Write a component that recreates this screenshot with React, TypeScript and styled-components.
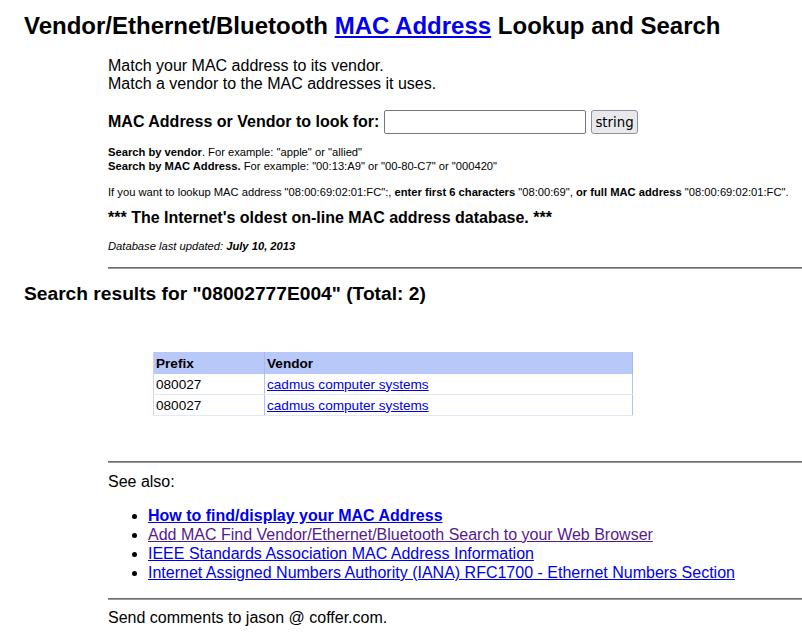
import React from 'react';
import styled, { createGlobalStyle } from 'styled-components';

const Global = createGlobalStyle`
  html, body { margin: 0; padding: 0; background: #fff; overflow-x: hidden; }
  body { font-family: "Liberation Sans", Arial, Helvetica, sans-serif; color: #000; }
`;

const Page = styled.div`
  padding: 12px 0 20px 24px;
`;

const Title = styled.h1`
  margin: 0;
  font-size: 24px;
  line-height: 28px;
  font-weight: bold;
`;

const Link = styled.a<{ $visited?: boolean; $bold?: boolean }>`
  color: ${(p) => (p.$visited ? '#551a8b' : '#0000ee')};
  text-decoration: underline;
  font-weight: ${(p) => (p.$bold ? 'bold' : 'inherit')};
  cursor: pointer;
`;

const Indented = styled.div`
  margin-left: 84px;
`;

const Intro = styled.p`
  margin: 17px 0 0;
  font-size: 16px;
  line-height: 18px;
`;

const SearchForm = styled.form`
  display: flex;
  align-items: center;
  gap: 5px;
  margin-top: 17px;
`;

const Label = styled.label`
  font-size: 16px;
  font-weight: bold;
`;

const Input = styled.input`
  box-sizing: border-box;
  width: 202px;
  height: 24px;
  border: 1px solid #767676;
  border-radius: 2px;
  padding: 1px 2px;
  margin: 0;
  font-family: "DejaVu Sans", sans-serif;
  font-size: 13.33px;
`;

const Button = styled.button`
  box-sizing: border-box;
  height: 24px;
  padding: 1px 3px;
  margin: 0;
  border: 1px solid #8f8f9d;
  border-radius: 3px;
  background: #e9e9ed;
  font-family: "DejaVu Sans", sans-serif;
  font-size: 13.33px;
  color: #000;
`;

const Small = styled.p<{ $top: number }>`
  margin: ${(p) => p.$top}px 0 0;
  font-size: 11.2px;
  line-height: 14px;
`;

const Slogan = styled.h3`
  margin: 10px 0 0;
  font-size: 16px;
  line-height: 18px;
  font-weight: bold;
`;

const Updated = styled.p`
  margin: 12px 0 0;
  font-size: 11.2px;
  line-height: 14px;
  font-style: italic;
`;

const Rule = styled.hr<{ $top: number }>`
  margin: ${(p) => p.$top}px 0 0;
  border: 0;
  border-top: 1px solid #6e6e6e;
  border-bottom: 1px solid #9a9a9a;
  height: 0;
`;

const ResultsTitle = styled.h2`
  margin: 14px 0 0;
  font-size: 19.2px;
  line-height: 22px;
  font-weight: bold;
`;

const Table = styled.table`
  margin: 47px 0 0 129px;
  width: 480px;
  border-collapse: collapse;
  font-size: 13.6px;
  border-left: 1px solid #c9d3f8;
  border-right: 1px solid #9fb1f3;
`;

const HeadCell = styled.th<{ $w?: number }>`
  background: #b8c8f8;
  text-align: left;
  font-weight: bold;
  padding: 0 2px;
  height: 22px;
  width: ${(p) => (p.$w ? `${p.$w}px` : 'auto')};
  border-right: 1px solid #a6b8f2;
`;

const Cell = styled.td`
  padding: 0 2px;
  height: 20px;
  border-right: 1px solid #b4c3f4;
  border-bottom: 1px solid #e2e7fa;
`;

const SeeAlso = styled.p`
  margin: 10px 0 0;
  font-size: 16px;
  line-height: 18px;
`;

const List = styled.ul`
  margin: 15px 0 0;
  padding-left: 40px;
  font-size: 16px;
  line-height: 19px;
`;

const Item = styled.li`
  margin: 0;
`;

const Footer = styled.p`
  margin: 9px 0 0;
  font-size: 16px;
  line-height: 18px;
`;

const rows = [
  { prefix: '080027', vendor: 'cadmus computer systems' },
  { prefix: '080027', vendor: 'cadmus computer systems' },
];

export default function App() {
  return (
    <>
      <Global />
      <Page>
        <Title>
          Vendor/Ethernet/Bluetooth <Link>MAC Address</Link> Lookup and Search
        </Title>
        <Indented>
          <Intro>
            Match your MAC address to its vendor.
            <br />
            Match a vendor to the MAC addresses it uses.
          </Intro>
          <SearchForm onSubmit={(e) => e.preventDefault()}>
            <Label htmlFor="q">MAC Address or Vendor to look for:</Label>
            <Input id="q" type="text" />
            <Button type="submit">string</Button>
          </SearchForm>
          <Small $top={11}>
            <b>Search by vendor</b>. For example: "apple" or "allied"
            <br />
            <b>Search by MAC Address.</b> For example: "00:13:A9" or "00-80-C7" or "000420"
          </Small>
          <Small $top={12}>
            If you want to lookup MAC address "08:00:69:02:01:FC":, <b>enter first 6 characters</b> "08:00:69", <b>or full MAC address</b> "08:00:69:02:01:FC".
          </Small>
          <Slogan>*** The Internet's oldest on-line MAC address database. ***</Slogan>
          <Updated>
            Database last updated: <b>July 10, 2013</b>
          </Updated>
          <Rule $top={14} />
        </Indented>
        <ResultsTitle>Search results for "08002777E004" (Total: 2)</ResultsTitle>
        <Table>
          <thead>
            <tr>
              <HeadCell $w={106}>Prefix</HeadCell>
              <HeadCell>Vendor</HeadCell>
            </tr>
          </thead>
          <tbody>
            {rows.map((r, i) => (
              <tr key={i}>
                <Cell>{r.prefix}</Cell>
                <Cell>
                  <Link>{r.vendor}</Link>
                </Cell>
              </tr>
            ))}
          </tbody>
        </Table>
        <Indented>
          <Rule $top={45} />
          <SeeAlso>See also:</SeeAlso>
          <List>
            <Item>
              <Link $bold>How to find/display your MAC Address</Link>
            </Item>
            <Item>
              <Link $visited>Add MAC Find Vendor/Ethernet/Bluetooth Search to your Web Browser</Link>
            </Item>
            <Item>
              <Link>IEEE Standards Association MAC Address Information</Link>
            </Item>
            <Item>
              <Link>Internet Assigned Numbers Authority (IANA) RFC1700 - Ethernet Numbers Section</Link>
            </Item>
          </List>
          <Rule $top={16} />
          <Footer>Send comments to jason @ coffer.com.</Footer>
        </Indented>
      </Page>
    </>
  );
}
